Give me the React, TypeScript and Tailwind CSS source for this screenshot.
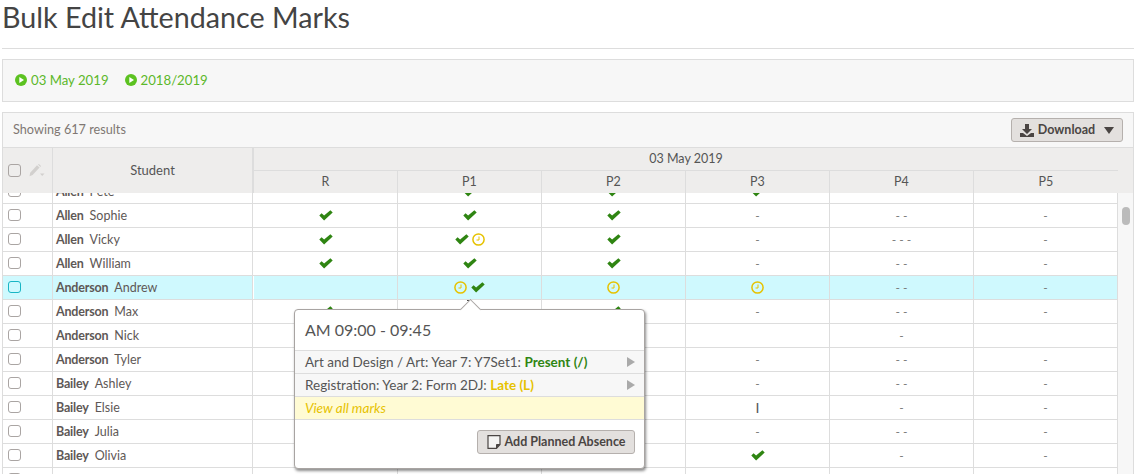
import React from "react";

const Check = () => (
  <svg width="14" height="11" viewBox="0 0 14 11" className="shrink-0">
    <path d="M0.3 5.6 L2.6 3.3 L5.1 5.6 L11.4 0.2 L13.7 2.5 L5.1 10.6 Z" fill="#2f8512" />
  </svg>
);

const Clock = () => (
  <svg width="13" height="13" viewBox="0 0 13 13" className="shrink-0">
    <circle cx="6.5" cy="6.5" r="5.6" fill="none" stroke="#e6c200" strokeWidth="1.5" />
    <path d="M7 3.5 V7 H4.5" fill="none" stroke="#e6c200" strokeWidth="1" />
  </svg>
);

const Play = () => (
  <svg width="12" height="12" viewBox="0 0 12 12" className="shrink-0">
    <circle cx="6" cy="6" r="6" fill="#5cc221" />
    <path d="M4.3 3 L9 6 L4.3 9 Z" fill="#fff" />
  </svg>
);

const Box = ({ active, big }: { active?: boolean; big?: boolean }) => (
  <div
    className={
      "rounded-[3px] border bg-transparent " +
      (big ? "w-[13px] h-[13px] " : "w-[13px] h-[12px] mt-[-2px] ") +
      (active ? "border-[#19b5c4]" : "border-[#aaa5a3]")
    }
  />
);

const Cell = ({ v }: { v: string }) => {
  let inner: React.ReactNode = v;
  if (v === "c") inner = <Check />;
  else if (v === "t") inner = <Clock />;
  else if (v === "ct")
    inner = (
      <>
        <Check />
        <span className="w-[3px]" />
        <Clock />
      </>
    );
  else if (v === "tc")
    inner = (
      <>
        <Clock />
        <span className="w-[4px] h-px bg-[#444] self-end mb-[-2px]" />
        <Check />
      </>
    );
  else if (v === "I") inner = <span className="text-[14px] text-[#555]">I</span>;
  return (
    <div className="flex items-center justify-center border-r border-[#ddd] text-[12px] text-[#777] whitespace-pre">
      {inner}
    </div>
  );
};

type Row = { l: string; f: string; m: string[]; on?: boolean };

const rows: Row[] = [
  { l: "Allen", f: "Pete", m: ["", "c", "c", "c", "", ""] },
  { l: "Allen", f: "Sophie", m: ["c", "c", "c", "-", "- -", "-"] },
  { l: "Allen", f: "Vicky", m: ["c", "ct", "c", "-", "- - -", "-"] },
  { l: "Allen", f: "William", m: ["c", "c", "c", "-", "- -", "-"] },
  { l: "Anderson", f: "Andrew", m: ["", "tc", "t", "t", "- -", "-"], on: true },
  { l: "Anderson", f: "Max", m: ["c", "c", "c", "-", "- -", "-"] },
  { l: "Anderson", f: "Nick", m: ["", "", "", "", "-", ""] },
  { l: "Anderson", f: "Tyler", m: ["", "", "", "-", "- -", "-"] },
  { l: "Bailey", f: "Ashley", m: ["", "", "", "-", "- -", "-"] },
  { l: "Bailey", f: "Elsie", m: ["", "", "", "I", "-", "-"] },
  { l: "Bailey", f: "Julia", m: ["", "", "", "-", "- -", "-"] },
  { l: "Bailey", f: "Olivia", m: ["", "", "", "c", "-", "-"] },
  { l: "", f: "", m: ["", "", "", "", "", ""] },
];

const PopRow = ({ children }: { children: React.ReactNode }) => (
  <div className="h-[23px] flex items-center justify-between bg-[#f7f7f7] border-b border-[#ddd] pl-[10px] pr-[9px] text-[13.5px] text-[#555]">
    <span>{children}</span>
    <span className="w-0 h-0 border-y-[5px] border-y-transparent border-l-[8px] border-l-[#aaa]" />
  </div>
);

export default function App() {
  return (
    <div className="relative w-[1139px] h-[474px] overflow-hidden bg-white font-['Lato',sans-serif] text-[#555] pl-[2px] pr-[5px]">
      <h1 className="h-[49px] border-b border-[#ddd] text-[#444] text-[28.7px] leading-[34px]">
        Bulk Edit Attendance Marks
      </h1>

      <div className="mt-[10px] h-[43px] border border-[#ddd] bg-[#f7f7f7] flex items-center gap-[16px] pl-[12px] text-[13.2px] text-[#5cb82a]">
        <span className="flex items-center gap-[4px]">
          <Play />
          03 May 2019
        </span>
        <span className="flex items-center gap-[4px]">
          <Play />
          2018/2019
        </span>
      </div>

      <div className="mt-[10px] border border-[#ddd] h-[400px] flex flex-col">
        <div className="h-[34px] shrink-0 bg-[#f7f7f7] flex items-center justify-between pl-[10px] pr-[10px] text-[12.7px] text-[#807773]">
          <span>Showing 617 results</span>
          <button className="w-[112px] h-[24px] rounded-[3px] border border-[#b5b0ad] bg-[#e3e0de] flex items-center justify-center gap-[4px] text-[12.5px] font-bold text-[#4a4543]">
            <svg width="14" height="13" viewBox="0 0 14 13">
              <path d="M5 0 H9 V5 H12 L7 10 L2 5 H5 Z" fill="#4a4543" />
              <path d="M0 9 H3 L7 12 L11 9 H14 V13 H0 Z" fill="#4a4543" />
            </svg>
            Download
            <span className="ml-[5px] w-0 h-0 border-x-[5px] border-x-transparent border-t-[7px] border-t-[#4a4543]" />
          </button>
        </div>

        <div className="h-[46px] shrink-0 bg-[#eeedec] border-t border-[#ddd] grid grid-cols-[50px_200px_1px_864px_15px] text-[12.5px] text-[#555]">
          <div className="border-r border-[#ddd] flex items-center gap-[8px] pl-[5px]">
            <Box big />
            <svg width="16" height="13" viewBox="0 0 16 13">
              <path d="M8 1.2 L10.6 3.6 L3.6 11 L0.5 12.3 L1.2 8.8 Z" fill="#d2d0ce" />
              <path d="M9 0.4 L9.9 0 L12 2 L11.4 2.9 Z" fill="#d2d0ce" />
              <path d="M11 9.5 H15.5 L13.2 12 Z" fill="#d2d0ce" />
            </svg>
          </div>
          <div className="border-r border-[#ddd] flex items-center justify-center text-[13px]">Student</div>
          <div className="bg-[#ddd]" />
          <div className="flex flex-col">
            <div className="h-[23px] border-b border-[#ddd] flex items-center justify-center">03 May 2019</div>
            <div className="flex-1 grid grid-cols-6">
              {["R", "P1", "P2", "P3", "P4", "P5"].map((p, i) => (
                <div key={p} className={"flex items-center justify-center " + (i < 5 ? "border-r border-[#ddd]" : "")}>
                  {p}
                </div>
              ))}
            </div>
          </div>
          <div />
        </div>

        <div className="flex-1 flex overflow-hidden">
          <div className="w-[1115px] overflow-hidden">
            <div className="-mt-[13px]">
              {rows.map((r, idx) => (
                <div
                  key={idx}
                  className={
                    "h-[24px] grid grid-cols-[50px_200px_1px_repeat(6,144px)] border-b border-[#ddd] " +
                    (r.on ? "bg-[#cff9fe]" : "bg-white")
                  }
                >
                  <div className="border-r border-[#ddd] flex items-center pl-[5px]">
                    <Box active={r.on} />
                  </div>
                  <div className="border-r border-[#ddd] flex items-center pl-[3px] pt-[1px] text-[12.5px] text-[#5e5856]">
                    <b className="font-bold mr-[6px] tracking-[-0.2px]">{r.l}</b>
                    {r.f}
                  </div>
                  <div className="bg-white" />
                  {r.m.map((v, i) => (
                    <Cell key={i} v={v} />
                  ))}
                </div>
              ))}
            </div>
          </div>
          <div className="w-[15px] bg-[#f7f7f7] pt-[14px] pl-[4px]">
            <div className="w-[8px] h-[18px] rounded-[4px] bg-[#bbb]" />
          </div>
        </div>
      </div>

      <div className="absolute left-[294px] top-[309px] w-[351px] h-[160px] bg-white border border-[#a8a4a2] rounded-[4px] shadow-[1px_2px_3px_rgba(0,0,0,0.45)] z-10">
        <div className="absolute left-[168px] top-[-8px] w-[15px] h-[15px] rotate-45 bg-white border-l border-t border-[#a8a4a2]" />
        <div className="relative h-[41px] flex items-center pl-[10px] text-[16px] text-[#555] border-b border-[#ddd]">
          AM 09:00 - 09:45
        </div>
        <PopRow>
          Art and Design / Art: Year 7: Y7Set1: <b className="font-bold text-[#2f8512]">Present (/)</b>
        </PopRow>
        <PopRow>
          Registration: Year 2: Form 2DJ: <b className="font-bold text-[#e6c200]">Late (L)</b>
        </PopRow>
        <div className="h-[23px] flex items-center bg-[#fffbd4] border-b border-[#ddd] pl-[10px] text-[13.5px] italic text-[#e6c200]">
          View all marks
        </div>
        <div className="flex justify-end pr-[9px] pt-[10px]">
          <button className="w-[158px] h-[24px] rounded-[3px] border border-[#b5b0ad] bg-[#e3e0de] flex items-center justify-center gap-[4px] text-[12.5px] font-bold text-[#4a4543]">
            <svg width="14" height="14" viewBox="0 0 14 14">
              <path d="M1 0.7 H13 V9.5 L9.5 13.3 H1 Z" fill="#f4f3f2" stroke="#4a4543" strokeWidth="1.2" />
              <path d="M9.5 13 V9.5 H13" fill="#4a4543" stroke="#4a4543" />
            </svg>
            Add Planned Absence
          </button>
        </div>
      </div>
    </div>
  );
}
